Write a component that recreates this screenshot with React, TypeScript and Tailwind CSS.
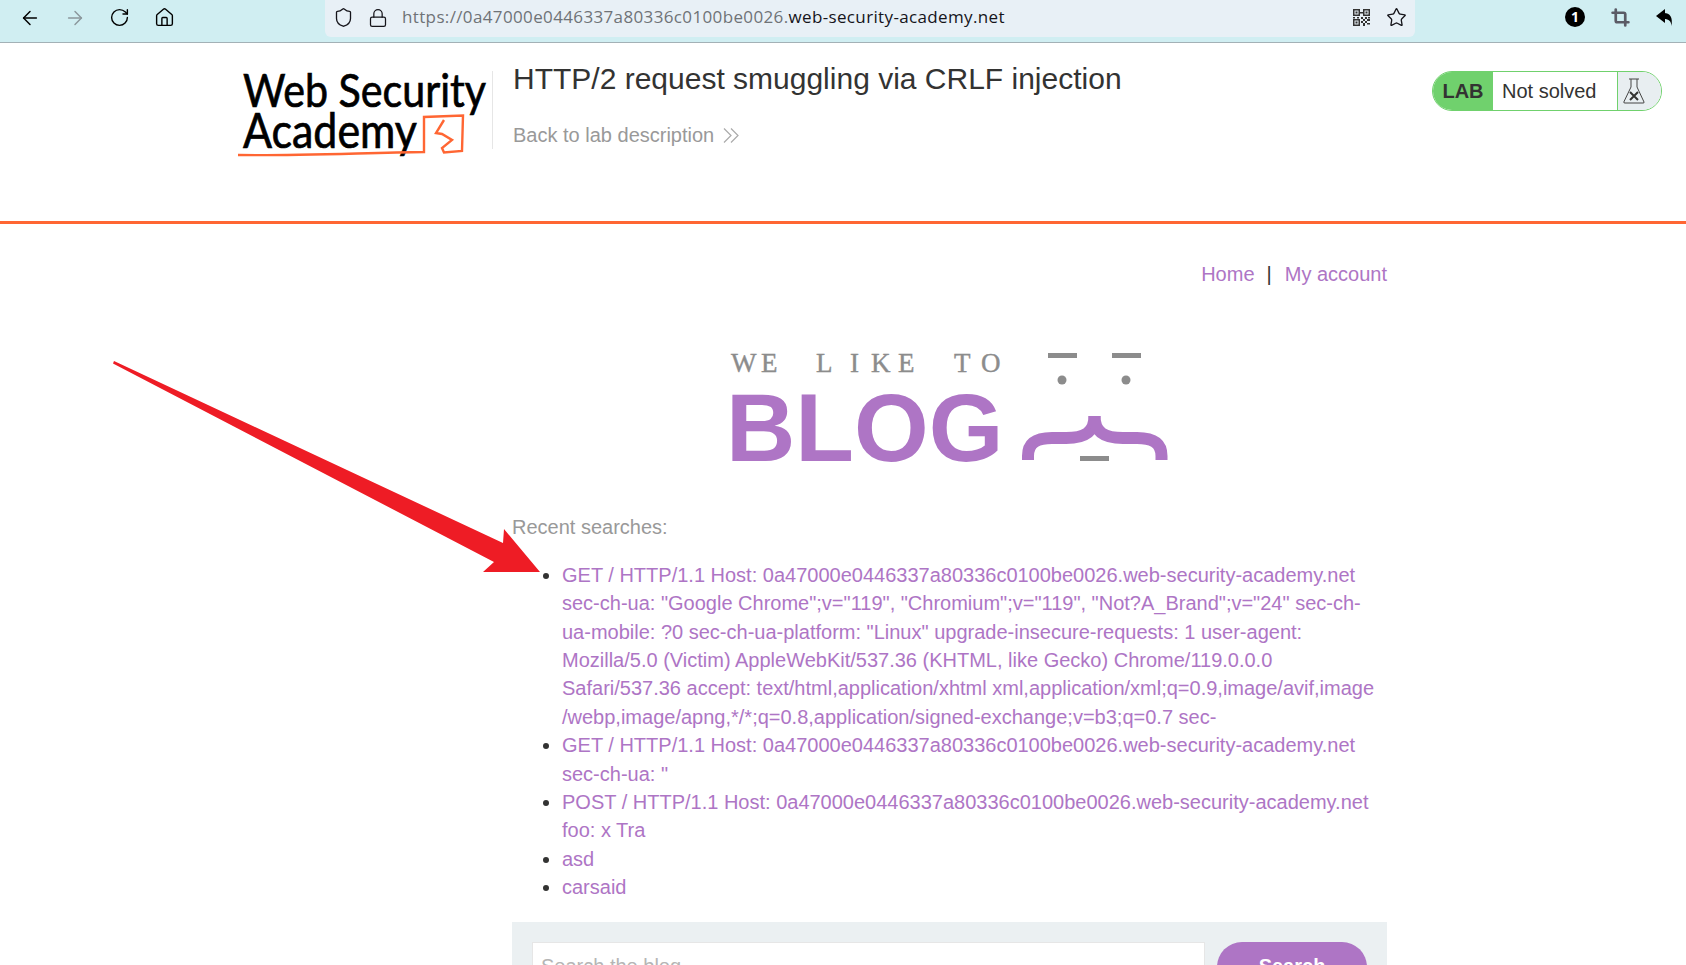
import { ArrowLeft, ArrowRight, RotateCw, Home, Shield, Lock, Star, Crop } from "lucide-react"

const searches = [
  <>
    GET / HTTP/1.1 Host: 0a47000e0446337a80336c0100be0026.web-security-academy.net sec-ch-ua: "Google Chrome";v="119", "Chromium";v="119", "Not?A_Brand";v="24" sec-ch-ua-mobile: ?0 sec-ch-ua-platform: "Linux" upgrade-insecure-requests: 1 user-agent: Mozilla/5.0 (Victim) AppleWebKit/537.36 (KHTML, like Gecko) Chrome/119.0.0.0{" "}
    <span className="whitespace-nowrap">Safari/537.36 accept: text/html,application/xhtml xml,application/xml;q=0.9,image/avif,image</span>
    <br />
    /webp,image/apng,*/*;q=0.8,application/signed-exchange;v=b3;q=0.7 sec-
  </>,
  'GET / HTTP/1.1 Host: 0a47000e0446337a80336c0100be0026.web-security-academy.net sec-ch-ua: "',
  "POST / HTTP/1.1 Host: 0a47000e0446337a80336c0100be0026.web-security-academy.net foo: x Tra",
  "asd",
  "carsaid",
]

function QrIcon() {
  return (
    <svg viewBox="0 0 17 17" className="w-[17px] h-[17px] mr-[16px] text-[#333]" fill="currentColor">
      <path d="M0 0h7v7H0zM1.5 1.5v4h4v-4zM10 0h7v7h-7zM11.5 1.5v4h4v-4zM0 10h7v7H0zM1.5 11.5v4h4v-4z" fillRule="evenodd" />
      <path d="M2.5 2.5h2v2h-2zM12.5 2.5h2v2h-2zM2.5 12.5h2v2h-2zM7 3h3v1.5H7zM8 8h2v2H8zM10 10h2v2h-2zM12 8h2v2h-2zM14 10h3v2h-3zM8 12h2v2H8zM12 12h2v2h-2zM10 14h2v3h-2zM14 14h3v1.5h-3zM0 8h2v1.5H0zM4 8h2v1.5H4zM15 8h2v1.5h-2z" />
    </svg>
  )
}

function ReplyIcon() {
  return (
    <svg viewBox="0 0 17 17" className="w-[17px] h-[17px] text-black" fill="currentColor">
      <path d="M0 7 L9 0 V14 Z" />
      <path d="M8 4 C14 4 17 8 15.5 17 C15 12 13 10 8 10 Z" />
    </svg>
  )
}

function BrowserBar() {
  return (
    <div className="h-[43px] shrink-0 bg-[#d0eef2] border-b border-[#a3b1b6] flex items-start font-['Open_Sans',sans-serif]">
      <div className="w-[325px] h-[35px] flex items-center pl-[19px] gap-[23px]">
        <ArrowLeft className="w-[22px] h-[22px] text-black" strokeWidth={1.6} />
        <ArrowRight className="w-[22px] h-[22px] text-[#8b979c]" strokeWidth={1.6} />
        <RotateCw className="w-[21px] h-[21px] text-black" strokeWidth={1.6} />
        <Home className="w-[21px] h-[21px] text-black ml-[1px]" strokeWidth={1.6} />
      </div>
      <div className="w-[1090px] h-[37px] bg-[#e8f0f6] rounded-b-md flex items-center pl-[8px] pr-[8px] pb-[2px]">
        <Shield className="w-[21px] h-[21px] text-[#15141a]" strokeWidth={1.5} />
        <Lock className="w-[20px] h-[20px] text-[#15141a] ml-[14px]" strokeWidth={1.5} />
        <div className="ml-[14px] text-[17px] text-[#6f7377] tracking-[0.36px] flex-1">
          https://0a47000e0446337a80336c0100be0026.<span className="text-[#15141a]">web-security-academy.net</span>
        </div>
        <QrIcon />
        <Star className="w-[21px] h-[21px] text-[#15141a]" strokeWidth={1.5} />
      </div>
      <div className="flex-1 h-[34px] flex items-center pl-[150px] gap-[26px]">
        <div className="w-[20px] h-[20px] rounded-full bg-black text-white text-[14px] font-bold flex items-center justify-center">1</div>
        <Crop className="w-[19px] h-[19px] text-[#5b5b66]" strokeWidth={3.4} />
        <ReplyIcon />
      </div>
    </div>
  )
}

function AcademyLogo() {
  return (
    <svg viewBox="235 65 260 100" className="w-[260px] h-[100px] shrink-0">
      <text x="243" y="107" textLength="243" lengthAdjust="spacingAndGlyphs" fontFamily="Lato, sans-serif" fontSize="47" fill="#000" stroke="#000" strokeWidth="0.7">Web Security</text>
      <text x="243" y="148" textLength="174" lengthAdjust="spacingAndGlyphs" fontFamily="Lato, sans-serif" fontSize="49" fill="#000" stroke="#000" strokeWidth="0.7">Academy</text>
      <path d="M238 155 C290 156 360 153 424 152 L424 117 L463 115.5 L462 151 L444 152.5 L442 148 L452 140 L442 134 L436 133 L444 120" fill="none" stroke="#ff6633" strokeWidth="2.4" />
    </svg>
  )
}

function BlogLogo() {
  return (
    <svg viewBox="725 345 450 125" className="w-[450px] h-[125px] ml-[213px]">
      <text x="731 761 816 850 871 898 954 981" y="373" fontFamily="'Liberation Serif', serif" fontSize="27" stroke="#8c8c8c" strokeWidth="0.4" fill="#8c8c8c">WELIKETO</text>
      <text x="726" y="462" fontFamily="'Liberation Sans', sans-serif" fontWeight="700" fontSize="96" fill="#ae75c5">BLOG</text>
      <rect x="1048" y="354" width="29" height="5" fill="#8c8c8c" />
      <rect x="1112" y="354" width="29" height="5" fill="#8c8c8c" />
      <circle cx="1062" cy="381" r="4.5" fill="#8c8c8c" />
      <circle cx="1126" cy="381" r="4.5" fill="#8c8c8c" />
      <rect x="1080" y="457" width="29" height="5" fill="#8c8c8c" />
      <path d="M1028 461 V457 C1028 443 1038 439 1052 439 H1066 C1084 439 1094.5 434 1094.5 417" fill="none" stroke="#ae75c5" strokeWidth="12" />
      <path d="M1161.5 461 V457 C1161.5 443 1151 439 1137 439 H1123 C1105 439 1094.5 434 1094.5 417" fill="none" stroke="#ae75c5" strokeWidth="12" />
    </svg>
  )
}

export default function App() {
  return (
    <div className="relative w-[1686px] h-[965px] overflow-hidden bg-white flex flex-col font-['Liberation_Sans',Arial,sans-serif] text-[20px] leading-[28.4px]">
      <BrowserBar />

      <header className="h-[181px] shrink-0 border-b-[3px] border-[#ff6633] flex items-start">
        <div className="ml-[235px] mt-[22px]">
          <AcademyLogo />
        </div>
        <div className="mt-[28px] ml-[-3px] h-[78px] border-l border-[#e6e6e6] pl-[20px]">
          <h2 className="text-[30px] leading-[36px] text-[#333332] mt-[-10px]">HTTP/2 request smuggling via CRLF injection</h2>
          <a className="mt-[24px] flex items-center text-[#999] gap-[9px]">
            Back to lab description
            <svg viewBox="0 0 16 15" className="w-[16px] h-[15px]" fill="none" stroke="#aaa" strokeWidth="1.2">
              <path d="M1 0.5l7 7-7 7M8 0.5l7 7-7 7" />
            </svg>
          </a>
        </div>
        <div className="ml-auto mr-[24px] mt-[28px] h-[40px] w-[230px] rounded-[20px] border border-[#70d16d] flex overflow-hidden text-[20px] leading-[38px] text-[#333332]">
          <div className="w-[60px] bg-[#70d16d] font-bold text-center">LAB</div>
          <div className="w-[124px] pl-[9px]">Not solved</div>
          <div className="flex-1 bg-[#e8eef1] border-l border-[#70d16d] flex items-center pl-[5px]">
            <svg viewBox="0 0 22 26" className="w-[22px] h-[26px]" fill="none" stroke="#444" strokeWidth="1">
              <path d="M6 1h10M8 1v8L0.8 24Q0.5 25 2 25h18Q21.5 25 21 24L14 9V1" />
              <path d="M7 14l8 8M15 14l-8 8" strokeWidth="2" stroke="#333332" />
            </svg>
          </div>
        </div>
      </header>

      <main className="ml-[512px] w-[875px] text-[#ae75c5]">
        <nav className="flex justify-end items-center mt-[36px] gap-[13px]">
          <a className="mr-[-1px]">Home</a>
          <span className="text-[#333332]">|</span>
          <a>My account</a>
        </nav>
        <div className="mt-[56px]">
          <BlogLogo />
        </div>
        <p className="mt-[44px] text-[#999]">Recent searches:</p>
        <ul className="list-disc pl-[50px] pr-[10px] mt-[19px] marker:text-[#333332]">
          {searches.map((s, i) => (
            <li key={i}>{s}</li>
          ))}
        </ul>
        <section className="mt-[20px] bg-[#ebf0f2] h-[100px] pt-[20px] px-[20px] flex items-start gap-[12px]">
          <input
            placeholder="Search the blog..."
            className="w-[673px] h-[50px] bg-white border border-[#e6e6e6] px-[8px] text-[20px] placeholder:text-[#b5b5b5]"
          />
          <button className="w-[150px] h-[50px] rounded-[25px] bg-[#ae75c5] text-white font-bold text-[20px]">Search</button>
        </section>
      </main>

      <svg className="absolute left-0 top-0 w-[1686px] h-[965px] pointer-events-none" viewBox="0 0 1686 965">
        <polygon points="114,361 503,543 504,529 540,572 483,572 494,562 113,363.5" fill="#ee1c25" />
      </svg>
    </div>
  )
}
